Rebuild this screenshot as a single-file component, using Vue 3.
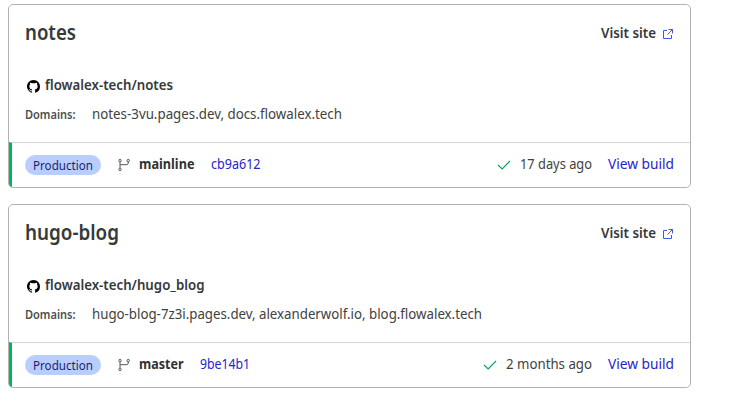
<script setup>
import { h } from 'vue'

// One line of text set to an exact advance width.
const FitText = ({ text, width }) =>
  h('svg', { width, height: 24, class: 'fit' }, [
    h('text', { x: 0, y: 17, textLength: width, lengthAdjust: 'spacingAndGlyphs' }, text),
  ])
FitText.props = ['text', 'width']

const projects = [
  {
    name: 'notes', nameWidth: 51,
    repo: 'flowalex-tech/notes', repoWidth: 128,
    domains: 'notes-3vu.pages.dev, docs.flowalex.tech', domainsWidth: 250,
    branch: 'mainline', branchWidth: 55.5,
    commit: 'cb9a612', commitWidth: 49.5,
    age: '17 days ago', ageWidth: 72,
  },
  {
    name: 'hugo-blog', nameWidth: 94,
    repo: 'flowalex-tech/hugo_blog', repoWidth: 159.5,
    domains: 'hugo-blog-7z3i.pages.dev, alexanderwolf.io, blog.flowalex.tech', domainsWidth: 390,
    branch: 'master', branchWidth: 44.5,
    commit: '9be14b1', commitWidth: 50,
    age: '2 months ago', ageWidth: 86,
  },
]
</script>

<template>
  <main class="list">
    <article v-for="p in projects" :key="p.name" class="card">
      <div class="body">
        <header class="head">
          <FitText class="title" :text="p.name" :width="p.nameWidth" />
          <a class="visit">
            <FitText class="semi" text="Visit site" :width="55" />
            <svg class="external" width="12" height="12" viewBox="0 0 12 12">
              <path d="M5 2.5H1.5v8h8V7M6.5 1.5h4v4M10.5 1.5 5.5 6.5" />
            </svg>
          </a>
        </header>
        <div class="repo">
          <svg width="13" height="13" viewBox="0 0 16 16">
            <path
              d="M8 0C3.58 0 0 3.58 0 8c0 3.54 2.29 6.53 5.47 7.59.4.07.55-.17.55-.38 0-.19-.01-.82-.01-1.49-2.01.37-2.53-.49-2.69-.94-.09-.23-.48-.94-.82-1.13-.28-.15-.68-.52-.01-.53.63-.01 1.08.58 1.23.82.72 1.21 1.87.87 2.33.66.07-.52.28-.87.51-1.07-1.78-.2-3.64-.89-3.64-3.95 0-.87.31-1.59.82-2.15-.08-.2-.36-1.02.08-2.12 0 0 .67-.21 2.2.82.64-.18 1.32-.27 2-.27s1.36.09 2 .27c1.53-1.04 2.2-.82 2.2-.82.44 1.1.16 1.92.08 2.12.51.56.82 1.27.82 2.15 0 3.07-1.87 3.75-3.65 3.95.29.25.54.73.54 1.48 0 1.07-.01 1.93-.01 2.2 0 .21.15.46.55.38A8.01 8.01 0 0 0 16 8c0-4.42-3.58-8-8-8z"
            />
          </svg>
          <FitText class="semi" :text="p.repo" :width="p.repoWidth" />
        </div>
        <div class="domains">
          <FitText class="label" text="Domains:" :width="50.5" />
          <FitText :text="p.domains" :width="p.domainsWidth" />
        </div>
      </div>
      <footer class="foot">
        <span class="pill"><FitText text="Production" :width="60" /></span>
        <svg class="branch" width="14" height="14" viewBox="0 0 14 14">
          <circle cx="3" cy="2.6" r="1.2" />
          <circle cx="3" cy="11.4" r="1.2" />
          <circle cx="11.2" cy="2.6" r="1.2" />
          <path d="M3 3.8v6.4M11.2 3.8v1.4a1.5 1.5 0 0 1-1.5 1.5H3" />
        </svg>
        <FitText class="bold line" :text="p.branch" :width="p.branchWidth" />
        <a class="commit"><FitText class="link line" :text="p.commit" :width="p.commitWidth" /></a>
        <svg class="check" width="14" height="12" viewBox="0 0 14 12">
          <path d="M1 6 5.2 10 13 2" />
        </svg>
        <FitText class="line" :text="p.age" :width="p.ageWidth" />
        <a class="build"><FitText class="link line" text="View build" :width="66" /></a>
      </footer>
    </article>
  </main>
</template>

<style>
body { background: #fff; }
</style>

<style scoped>
.list {
  display: flex;
  flex-direction: column;
  gap: 16px;
  width: 683px;
  padding: 4px 0 0 8px;
  font-family: "Noto Sans", "Open Sans", sans-serif;
  font-size: 14.5px;
  font-stretch: 85%;
  color: #404242;
}
.card {
  box-sizing: border-box;
  height: 184px;
  border: 1px solid #b3b3b3;
  border-radius: 5px;
  overflow: hidden;
}
svg { display: block; flex: none; overflow: visible; }
.fit { fill: currentColor; }
a { display: flex; }
.body { box-sizing: border-box; height: 137px; padding: 16px 16px 0; }
.head { display: flex; justify-content: space-between; height: 24px; }
.title { font-size: 21px; font-weight: 600; color: #36393a; transform: translateY(2px); }
.visit { align-items: center; gap: 6px; color: #313131; }
.semi { font-weight: 600; color: #36393a; }
.external { fill: none; stroke: #405be0; stroke-width: 1; transform: translateY(1px); }
.repo { display: flex; align-items: center; gap: 5px; height: 24px; margin-top: 28px; padding-left: 2px; }
.repo > svg:first-child { fill: #000; transform: translateY(1px); }
.domains { display: flex; gap: 16px; height: 24px; margin-top: 5px; }
.label { font-size: 12px; font-weight: 600; color: #4c4f50; }
.foot {
  box-sizing: border-box;
  display: flex;
  align-items: center;
  height: 45px;
  padding: 0 16px 0 13px;
  border-top: 1px solid #d5d5d5;
  border-left: 3px solid #00b85c;
}
.pill {
  display: flex;
  align-items: center;
  justify-content: center;
  width: 76px;
  height: 20px;
  border-radius: 10px;
  background: #b9ceff;
  color: #1b1f73;
  font-size: 12px;
}
.line { transform: translateY(-1px); }
.branch { margin: 0 8px 0 16px; fill: none; stroke: #555; stroke-width: 1; }
.bold { font-weight: 700; color: #313131; }
.commit { margin-left: 16px; }
.link { color: #2424c9; }
.check { margin: 0 9px 0 auto; fill: none; stroke: #00a651; stroke-width: 1.1; }
.build { margin-left: 16px; }
</style>
